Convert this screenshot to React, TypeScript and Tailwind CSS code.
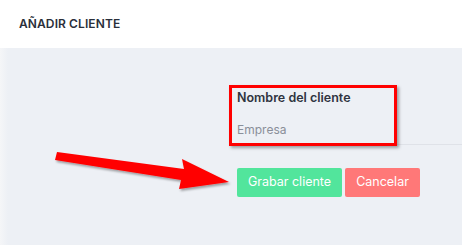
export default function App() {
  return (
    <div className="relative w-[462px] h-[245px] overflow-hidden bg-[#edf0f5] font-['Inter',sans-serif]">
      <div className="h-[48px] bg-white flex items-center pl-[19px]">
        <span className="text-[12px] font-semibold tracking-[0.1px] text-[#2a2f3a]">AÑADIR CLIENTE</span>
      </div>
      <div className="absolute left-0 top-[48px] bottom-0 w-[8px] bg-gradient-to-r from-[#f5f6f8] to-[#edf0f5]" />
      <div className="pl-[229px] pt-[38px]">
        <div className="border-b border-[#dfe2e8] pl-[8px] pb-[7px]">
          <div className="text-[12.5px] font-semibold text-[#2f3440] leading-[15px] pt-[4px]">Nombre del cliente</div>
          <div className="mt-[17px] text-[12px] text-[#8a8f99] leading-[15px]">Empresa</div>
        </div>
        <div className="flex gap-[3px] pl-[8px] mt-[23px]">
          <button className="h-[29px] w-[105px] rounded-[2px] bg-[#52e59c] text-white text-[12.5px]">Grabar cliente</button>
          <button className="h-[29px] w-[75px] rounded-[2px] bg-[#ff7878] text-white text-[12.5px]">Cancelar</button>
        </div>
      </div>
      <div className="absolute left-[229px] top-[85px] w-[168px] h-[61px] border-[3px] border-[#ff0000] shadow-[2px_2px_3px_rgba(0,0,0,0.35)]" />
      <svg className="absolute left-0 top-0" width="462" height="245" viewBox="0 0 462 245">
        <defs>
          <filter id="sh" x="-10%" y="-10%" width="130%" height="140%">
            <feDropShadow dx="1.5" dy="2" stdDeviation="1.2" floodColor="#000" floodOpacity="0.35" />
          </filter>
        </defs>
        <polygon
          filter="url(#sh)"
          fill="#ff0000"
          points="57,152 184,169 182,159 229,182 179,189 181,180 55,160"
        />
      </svg>
    </div>
  );
}
